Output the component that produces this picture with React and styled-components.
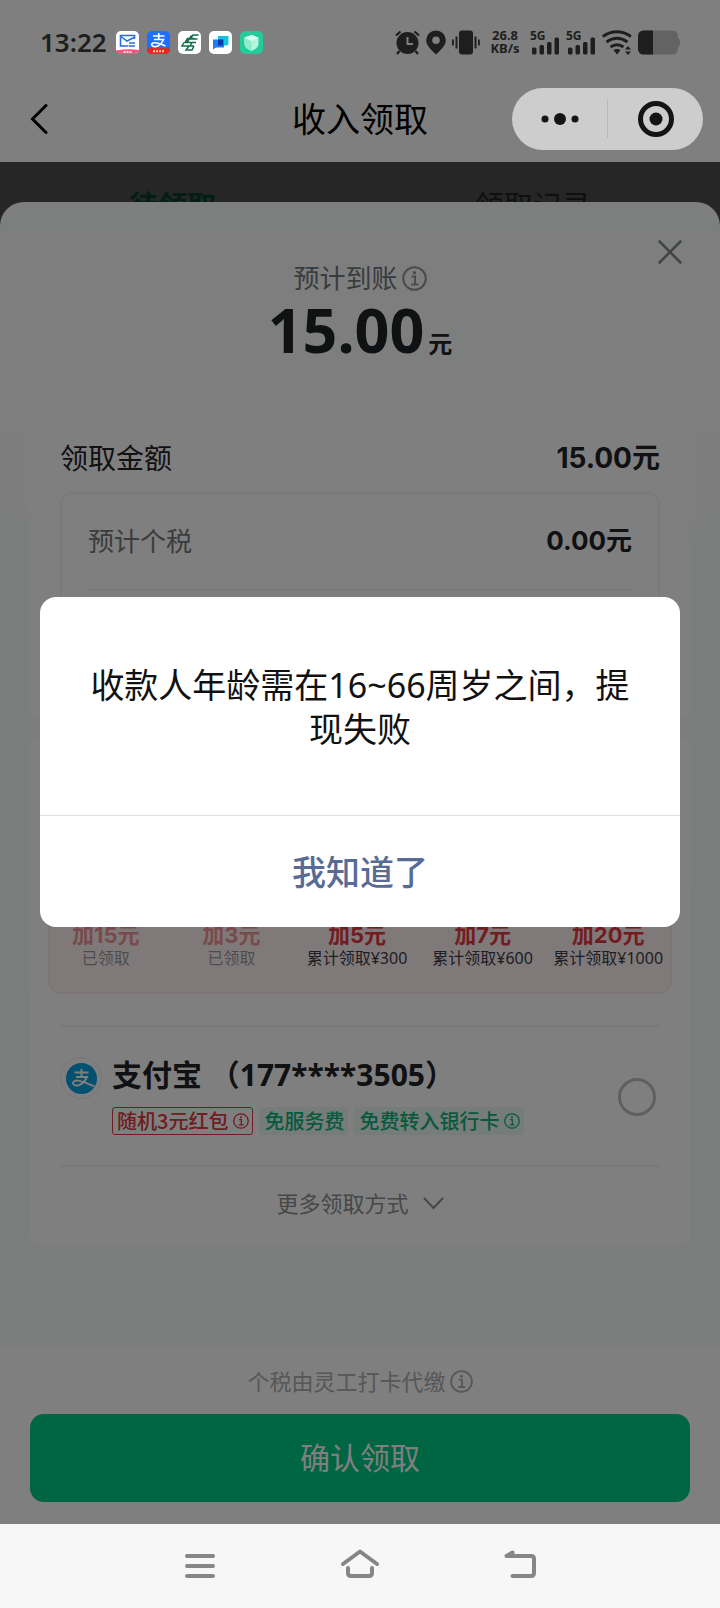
import React from "react";
import styled, { createGlobalStyle, css } from "styled-components";

const GlobalStyle = createGlobalStyle`
  *, *::before, *::after { box-sizing: border-box; }
  body {
    margin: 0;
    background: #fff;
    color: #1f2227;
    font-family: "Noto Sans", "Noto Sans CJK SC", sans-serif;
  }
  button {
    border: 0;
    padding: 0;
    background: none;
    color: inherit;
    font: inherit;
    cursor: pointer;
  }
  h1, p, ul { margin: 0; padding: 0; }
  ul { list-style: none; }
  svg { display: block; flex: none; }
`;

const numeric = css`
  font-family: Inter, "Noto Sans CJK SC", sans-serif;
  font-weight: 700;
`;

const Screen = styled.div`
  min-height: 100vh;
  display: flex;
  flex-direction: column;
`;

const AppView = styled.div`
  position: relative;
  flex: 1;
  display: flex;
  flex-direction: column;
`;

/* Status bar */
const StatusBar = styled.div`
  position: relative;
  z-index: 2;
  height: 78px;
  padding: 6px 40px 0;
  display: flex;
  align-items: center;
  justify-content: space-between;
  color: #1e1e1e;
`;

const StatusGroup = styled.div`
  display: flex;
  align-items: center;
  gap: ${(p) => p.$gap}px;
`;

const Clock = styled.time`
  width: 68px;
  font-size: 26px;
  line-height: 30px;
  font-weight: 600;
`;

const Speed = styled.span`
  width: 38px;
  text-align: center;
  font-size: 13px;
  line-height: 13px;
  font-weight: 700;
`;

/* Navigation bar */
const NavBar = styled.header`
  height: 84px;
  padding: 0 17px 2px;
  display: grid;
  grid-template-columns: 1fr auto 1fr;
  align-items: center;
  color: #000;
`;

const BackButton = styled.button`
  justify-self: start;
  padding: 2px 13px;
`;

const NavTitle = styled.h1`
  font-size: 34px;
  line-height: 44px;
  font-weight: 400;
`;

const Capsule = styled.div`
  position: relative;
  z-index: 2;
  justify-self: end;
  width: 191px;
  height: 62px;
  display: flex;
  align-items: center;
  border-radius: 31px;
  background: #cdcdcd;
  color: #141414;
`;

const CapsuleButton = styled.button`
  flex: 1;
  display: flex;
  justify-content: center;
  & + & { border-left: 1px solid #b9b9b9; }
`;

/* Tabs under the sheet */
const Backdrop = styled.div`
  flex: 1;
  display: flex;
  flex-direction: column;
  background: #4c4c4c;
`;

const Tabs = styled.nav`
  height: 40px;
  padding-top: 24px;
  overflow: hidden;
  display: flex;
  align-items: flex-start;
  justify-content: space-around;
`;

const Tab = styled.button`
  font-size: 29px;
  line-height: 40px;
  font-weight: ${(p) => (p.$active ? 700 : 400)};
  color: ${(p) => (p.$active ? "#063c29" : "#1e1e1e")};
`;

/* Sheet */
const Sheet = styled.section`
  position: relative;
  flex: 1;
  display: flex;
  flex-direction: column;
  border-radius: 24px 24px 0 0;
  background: linear-gradient(#fbfdfc, #f4fbf8);
`;

const CloseButton = styled.button`
  position: absolute;
  top: 34px;
  right: 34px;
  padding: 4px;
  color: #84868a;
`;

const Estimate = styled.div`
  padding: 58px 0 35px;
  display: flex;
  flex-direction: column;
  align-items: center;
`;

const EstimateLabel = styled.p`
  display: flex;
  align-items: center;
  gap: 4px;
  font-size: 26px;
  line-height: 36px;
  color: #73777c;
`;

const EstimateValue = styled.p`
  display: flex;
  align-items: baseline;
  gap: 4px;
  font-size: 61px;
  line-height: 68px;
  font-weight: 700;
`;

const Unit = styled.span`
  font-size: 24px;
`;

const InfoButton = styled.button`
  color: ${(p) => p.$color};
`;

const Card = styled.div`
  margin: 0 30px 20px;
  padding: ${(p) => p.$pad};
  border-radius: 12px;
  background: #fff;
`;

const AmountRow = styled.div`
  display: flex;
  align-items: center;
  justify-content: space-between;
  font-size: ${(p) => p.$size}px;
  line-height: 40px;
`;

const AmountLabel = styled.span`
  color: ${(p) => (p.$muted ? "#75787c" : "#1f2227")};
`;

const AmountValue = styled.span`
  ${numeric}
`;

const Breakdown = styled.div`
  height: 201px;
  margin-top: 14px;
  padding: 27px 26px;
  border: 2px solid #f4f4f4;
  border-radius: 12px;
`;

const Rule = styled.hr`
  height: 2px;
  margin: ${(p) => p.$margin};
  border: 0;
  background: #f2f2f2;
`;

/* Reward steps */
const Rewards = styled.div`
  margin: 0 -12px;
  padding: 60px 0 24px;
  border: 2px solid #fdecec;
  border-radius: 14px;
  background: #fff4f3;
`;

const RewardList = styled.ul`
  margin: 0 -1px 0 -7px;
  display: grid;
  grid-template-columns: repeat(5, 1fr);
`;

const Reward = styled.li`
  display: flex;
  flex-direction: column;
  align-items: center;
  white-space: nowrap;
  opacity: ${(p) => (p.$done ? 0.5 : 1)};
`;

const RewardAmount = styled.strong`
  ${numeric}
  font-size: 22px;
  line-height: 26px;
  color: #e5393f;
`;

const RewardNote = styled.span`
  font-size: 16px;
  line-height: 20px;
  color: #3c3c4c;
`;

/* Payment method */
const Method = styled.label`
  display: grid;
  grid-template-columns: auto 1fr auto;
  align-items: center;
  gap: 10px;
  padding: 26px 4px 30px 0;
`;

const MethodLogo = styled.span`
  width: 42px;
  height: 42px;
  align-self: start;
  margin-top: 4px;
  display: grid;
  place-items: center;
  border: 1px solid #f3eaea;
  border-radius: 50%;
`;

const MethodName = styled.span`
  display: block;
  font-size: 30px;
  line-height: 44px;
  font-weight: 700;
`;

const TagRow = styled.span`
  margin-top: 10px;
  display: flex;
  gap: 6px;
`;

const Tag = styled.span`
  height: 28px;
  padding: 0 3px 0 4px;
  display: flex;
  align-items: center;
  gap: 5px;
  border: 1px solid ${(p) => (p.$tone === "red" ? "#dc3a40" : "transparent")};
  border-radius: 3px;
  background: ${(p) => (p.$tone === "red" ? "transparent" : "#eaf8f2")};
  color: ${(p) => (p.$tone === "red" ? "#dc3a40" : "#0fb37c")};
  font-size: 20px;
  line-height: 26px;
  font-weight: 500;
  font-family: "Noto Sans CJK SC", sans-serif;
  white-space: nowrap;
`;

const Radio = styled.input`
  appearance: none;
  width: 38px;
  height: 38px;
  margin: 6px 0 0;
  border: 3px solid #bfbfbf;
  border-radius: 50%;
`;

const MoreButton = styled.button`
  width: 100%;
  display: flex;
  align-items: center;
  justify-content: center;
  gap: 14px;
  font-size: 22px;
  line-height: 32px;
  color: #8c8e91;
`;

/* Footer */
const Footer = styled.footer`
  margin-top: auto;
  padding: 18px 30px 22px;
  background: #fff;
`;

const FooterNote = styled.p`
  display: flex;
  align-items: center;
  justify-content: center;
  gap: 4px;
  font-size: 22px;
  line-height: 32px;
  color: #adafb1;
`;

const ConfirmButton = styled.button`
  width: 100%;
  height: 88px;
  margin-top: 17px;
  padding-bottom: 4px;
  border-radius: 14px;
  background: #00cb84;
  color: #fff;
  font-size: 30px;
`;

/* Dialog */
const Mask = styled.div`
  position: absolute;
  inset: 0;
  z-index: 1;
  padding: 0 40px;
  display: flex;
  align-items: center;
  background: rgba(0, 0, 0, 0.5);
`;

const Dialog = styled.div`
  width: 100%;
  overflow: hidden;
  border-radius: 16px;
  background: #fff;
  color: #111;
`;

const DialogMessage = styled.p`
  padding: 66px 48px 64px;
  text-align: center;
  font-size: 34px;
  line-height: 44px;
`;

const DialogButton = styled.button`
  width: 100%;
  height: 112px;
  padding-bottom: 2px;
  border-top: 1px solid #e0e0e0;
  color: #576b95;
  font-size: 34px;
  font-weight: 500;
  font-family: "Noto Sans CJK SC", sans-serif;
`;

/* System navigation */
const SystemBar = styled.nav`
  height: 84px;
  padding: 0 calc(100% / 9);
  display: flex;
  align-items: center;
  justify-content: center;
  background: #f7f7f7;
  color: #868686;
`;

const SystemButton = styled.button`
  width: 160px;
  display: flex;
  justify-content: center;
`;

function InfoIcon({ size = 25 }) {
  return (
    <svg width={size} height={size} viewBox="0 0 25 25" fill="none" stroke="currentColor" strokeWidth="2">
      <circle cx="12.500" cy="12.500" r="11.300" />
      <path d="M9.500 10.500h3.500v8M9 18.500h7.500" />
      <circle cx="12.500" cy="6.800" r="0.700" fill="currentColor" />
    </svg>
  );
}

function AppIcons() {
  return (
    <>
      <svg width="23" height="23" viewBox="0 0 23 23">
        <rect width="23" height="23" rx="5" fill="#fff" />
        <path d="M0 19.500Q12 17.500 23 19v0q-1 4-5 4H5q-5 0-5-3.500z" fill="#ea5a80" />
        <path d="M18.500 8V4.500h-14v10.500h8" fill="none" stroke="#2a6de0" strokeWidth="1.600" />
        <path d="M5 5.500l6 4.500 7-3.500M13 12h6M13 15h6" fill="none" stroke="#2a6de0" strokeWidth="1.500" />
        <path d="M7.500 21h8" stroke="#fff" strokeWidth="1.500" strokeDasharray="2 1" />
      </svg>
      <svg width="23" height="23" viewBox="0 0 23 23">
        <rect width="23" height="23" rx="5" fill="#1f70ff" />
        <path d="M0 17.500Q11.500 15.500 23 17.500V18q0 5-5 5H5q-5 0-5-5z" fill="#e02a24" />
        <path d="M6 5h11.500M11.700 2v6.500M7 8.500h9.500Q14 14 9.500 15.500C6 16.300 4 14.500 5 12.800c1.500-2.200 6-1 13.500 2.200" fill="none" stroke="#fff" strokeWidth="1.700" />
        <path d="M6 20.300h11" stroke="#ffc9a8" strokeWidth="2" strokeDasharray="2 1" />
      </svg>
      <svg width="23" height="23" viewBox="0 0 23 23">
        <rect width="23" height="23" rx="5" fill="#fff" />
        <path d="M20.500 4H15l-3 4h7.500M16.500 7.500H9.500L7 11.500h11M14 11.500L12 15H4l2-3.500M16 15h-5l-3 4h6l2-4M13.500 4.500L9 11.500" fill="none" stroke="#0d6e48" strokeWidth="1.500" />
      </svg>
      <svg width="23" height="23" viewBox="0 0 23 23">
        <rect width="23" height="23" rx="5" fill="#fff" />
        <path d="M9 5h10.500v8.500l-1.500 1H9z" fill="#12c6dd" />
        <path d="M4 8.500h11v8H7l-3 2z" fill="#1e7ff2" />
        <path d="M9 8.500h5v6H9z" fill="#0b3da8" />
      </svg>
      <svg width="23" height="23" viewBox="0 0 23 23">
        <rect width="23" height="23" rx="5" fill="#22cb98" />
        <path d="M11.500 4l7 2.500v6q0 5-7 7.500-7-2.500-7-7.500v-6z" fill="#b5f5df" />
        <path d="M11.500 10v10q-7-2.500-7-7.500v-6z" fill="#8fecca" />
        <path d="M11.500 4l7 2.500-7 3.500-7-3.500z" fill="#dafcf0" />
      </svg>
    </>
  );
}

function AlarmIcon() {
  return (
    <svg width="25" height="25" viewBox="0 0 25 25" fill="none" stroke="#1e1e1e">
      <circle cx="12.500" cy="13" r="11" fill="#1e1e1e" stroke="none" />
      <path d="M1 5.500L5.500 1.500M19.500 1.500L24 5.500M4.500 21L2 24M20.500 21l2.500 3" strokeWidth="2.300" />
      <path d="M12.500 7v7h5.500" stroke="#808080" strokeWidth="2" />
    </svg>
  );
}

function PinIcon() {
  return (
    <svg width="20" height="25" viewBox="0 0 20 25">
      <path fillRule="evenodd" fill="#1e1e1e" d="M10 .5a9.800 9.800 0 0 1 9.800 9.800C19.800 15.500 15 20 10 24.500 5 20 .2 15.500.2 10.300A9.800 9.800 0 0 1 10 .5zm0 6a3.800 3.800 0 1 0 0 7.600 3.800 3.800 0 0 0 0-7.600z" />
    </svg>
  );
}

function VibrateIcon() {
  return (
    <svg width="28" height="25" viewBox="0 0 28 25" fill="#1e1e1e">
      <rect x="7" y="0.500" width="14" height="24" rx="3" />
      <path d="M3.500 6.500h2v12h-2zM22.500 6.500h2v12h-2zM0 9.500h1.800v6H0zM26 9.500h1.800v6H26z" />
    </svg>
  );
}

const SignalSvg = styled.svg`
  overflow: visible;
`;

const SignalText = styled.text`
  font: 700 12px "Noto Sans", sans-serif;
`;

function SignalIcon() {
  return (
    <SignalSvg width="30" height="25" viewBox="0 0 30 25" fill="#1e1e1e">
      <SignalText x="0" y="10">5G</SignalText>
      <rect x="2" y="17.500" width="4.500" height="7" rx="1.500" />
      <rect x="9.500" y="15" width="4.500" height="9.500" rx="1.500" />
      <rect x="17" y="12" width="4.500" height="12.500" rx="1.500" />
      <rect x="24.500" y="7.500" width="4.500" height="17" rx="1.500" />
    </SignalSvg>
  );
}

function WifiIcon() {
  return (
    <svg width="30" height="25" viewBox="0 0 30 25" fill="none" stroke="#1e1e1e" strokeWidth="2.800">
      <path d="M.8 6.500q14-9.500 28.200 0M4.500 12q10.500-7.500 21 0M8.500 17q6.500-4.500 13 0" />
      <path d="M11.500 20q3.500-2 7 0L15 24.500z" fill="#1e1e1e" stroke="none" />
      <path d="M23 19.500l3-3.500 3 3.500zM23 21.500l3 3.500 3-3.500z" fill="#1e1e1e" stroke="none" />
    </svg>
  );
}

function BatteryIcon() {
  return (
    <svg width="42" height="25" viewBox="0 0 42 25">
      <path d="M6 .5h28q6 0 6 6v1.500q2 .5 2 4.500t-2 4.500v1.500q0 6-6 6H6q-6 0-6-6v-12q0-6 6-6z" fill="#636363" />
      <path d="M15 .5v24H6q-6 0-6-6v-12q0-6 6-6z" fill="#1e1e1e" />
    </svg>
  );
}

function AlipayIcon() {
  return (
    <svg width="31" height="31" viewBox="0 0 31 31" fill="none">
      <circle cx="15.500" cy="15.500" r="15.500" fill="#04a2e2" />
      <path d="M8.500 9.500h14M15.500 6v8M10 14h11q-3 6.500-8.500 8.300c-4 1-6.300-1.300-5-3.500 2-2.800 7-1.300 21 4.500" stroke="#fff" strokeWidth="1.900" />
    </svg>
  );
}

const REWARDS = [
  { amount: "加15元", note: "已领取", done: true },
  { amount: "加3元", note: "已领取", done: true },
  { amount: "加5元", note: "累计领取¥300" },
  { amount: "加7元", note: "累计领取¥600" },
  { amount: "加20元", note: "累计领取¥1000" },
];

export default function App() {
  return (
    <Screen>
      <GlobalStyle />
      <AppView>
        <StatusBar>
          <StatusGroup $gap={8}>
            <Clock>13:22</Clock>
            <AppIcons />
          </StatusGroup>
          <StatusGroup $gap={6}>
            <AlarmIcon />
            <PinIcon />
            <VibrateIcon />
            <Speed>26.8 KB/s</Speed>
            <SignalIcon />
            <SignalIcon />
            <WifiIcon />
            <BatteryIcon />
          </StatusGroup>
        </StatusBar>

        <NavBar>
          <BackButton aria-label="返回">
            <svg width="18" height="30" viewBox="0 0 18 30" fill="none" stroke="currentColor" strokeWidth="3" strokeLinecap="round">
              <path d="M16 1.500L2.500 15 16 28.500" />
            </svg>
          </BackButton>
          <NavTitle>收入领取</NavTitle>
          <Capsule>
            <CapsuleButton aria-label="更多">
              <svg width="38" height="38" viewBox="0 0 38 38" fill="currentColor">
                <circle cx="4" cy="19" r="3.500" />
                <circle cx="19" cy="19" r="6" />
                <circle cx="34" cy="19" r="3.500" />
              </svg>
            </CapsuleButton>
            <CapsuleButton aria-label="关闭小程序">
              <svg width="38" height="38" viewBox="0 0 38 38">
                <circle cx="19" cy="19" r="15.500" fill="none" stroke="currentColor" strokeWidth="5" />
                <circle cx="19" cy="19" r="6.500" fill="currentColor" />
              </svg>
            </CapsuleButton>
          </Capsule>
        </NavBar>

        <Backdrop>
          <Tabs>
            <Tab $active>待领取</Tab>
            <Tab>领取记录</Tab>
          </Tabs>

          <Sheet>
            <CloseButton aria-label="关闭">
              <svg width="24" height="24" viewBox="0 0 24 24" stroke="currentColor" strokeWidth="2.500" strokeLinecap="round">
                <path d="M1.500 1.500l21 21M22.500 1.500l-21 21" />
              </svg>
            </CloseButton>

            <Estimate>
              <EstimateLabel>
                预计到账
                <InfoButton $color="#94979b" aria-label="到账说明">
                  <InfoIcon />
                </InfoButton>
              </EstimateLabel>
              <EstimateValue>
                15.00<Unit>元</Unit>
              </EstimateValue>
            </Estimate>

            <Card $pad="25px 30px">
              <AmountRow $size={28}>
                <AmountLabel>领取金额</AmountLabel>
                <AmountValue>15.00元</AmountValue>
              </AmountRow>
              <Breakdown>
                <AmountRow $size={26}>
                  <AmountLabel $muted>预计个税</AmountLabel>
                  <AmountValue>0.00元</AmountValue>
                </AmountRow>
                <Rule $margin="28px 0 0" />
              </Breakdown>
            </Card>

            <Card $pad="122px 30px 26px">
              <Rewards>
                <RewardList>
                  {REWARDS.map((r) => (
                    <Reward key={r.amount} $done={r.done}>
                      <RewardAmount>{r.amount}</RewardAmount>
                      <RewardNote>{r.note}</RewardNote>
                    </Reward>
                  ))}
                </RewardList>
              </Rewards>
              <Rule $margin="31px 0 0" />
              <Method>
                <MethodLogo>
                  <AlipayIcon />
                </MethodLogo>
                <span>
                  <MethodName>支付宝 （177****3505）</MethodName>
                  <TagRow>
                    <Tag $tone="red">
                      随机3元红包
                      <InfoIcon size={16} />
                    </Tag>
                    <Tag>免服务费</Tag>
                    <Tag>
                      免费转入银行卡
                      <InfoIcon size={16} />
                    </Tag>
                  </TagRow>
                </span>
                <Radio type="radio" name="method" />
              </Method>
              <Rule $margin="0 0 20px" />
              <MoreButton>
                更多领取方式
                <svg width="21" height="13" viewBox="0 0 21 13" fill="none" stroke="currentColor" strokeWidth="2">
                  <path d="M1 1l9.500 10L20 1" />
                </svg>
              </MoreButton>
            </Card>

            <Footer>
              <FooterNote>
                个税由灵工打卡代缴
                <InfoButton $color="#adafb1" aria-label="代缴说明">
                  <InfoIcon size={23} />
                </InfoButton>
              </FooterNote>
              <ConfirmButton>确认领取</ConfirmButton>
            </Footer>
          </Sheet>
        </Backdrop>

        <Mask>
          <Dialog role="alertdialog" aria-modal="true">
            <DialogMessage>收款人年龄需在16~66周岁之间，提现失败</DialogMessage>
            <DialogButton>我知道了</DialogButton>
          </Dialog>
        </Mask>
      </AppView>

      <SystemBar>
        <SystemButton aria-label="最近任务">
          <svg width="40" height="40" viewBox="0 0 40 40" stroke="currentColor" strokeWidth="4" strokeLinecap="round">
            <path d="M7 10h26M7 20h26M7 30h26" />
          </svg>
        </SystemButton>
        <SystemButton aria-label="主屏幕">
          <svg width="40" height="40" viewBox="0 0 40 40" fill="none" stroke="currentColor" strokeWidth="4" strokeLinecap="round" strokeLinejoin="round">
            <path d="M3 18L20 5.500 37 18M8 22v5q0 3 3 3h18q3 0 3-3v-5" />
          </svg>
        </SystemButton>
        <SystemButton aria-label="返回上一级">
          <svg width="40" height="40" viewBox="0 0 40 40" fill="none" stroke="currentColor" strokeWidth="4" strokeLinecap="round" strokeLinejoin="round">
            <path d="M12.500 6.500L6.500 10H31q3 0 3 3v14q0 3-3 3H12.500" />
          </svg>
        </SystemButton>
      </SystemBar>
    </Screen>
  );
}
